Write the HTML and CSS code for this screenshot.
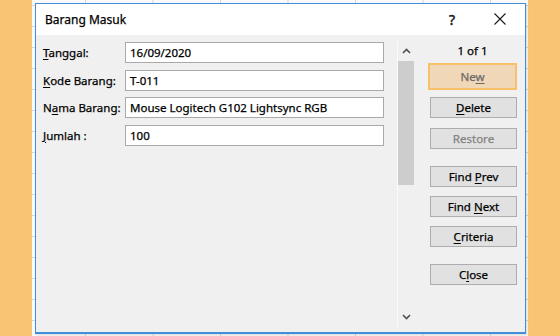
FILE: index.html
```html
<!DOCTYPE html>
<html>
<head>
<meta charset="utf-8">
<link rel="stylesheet" href="styles.css">
</head>
<body>
<div class="sheet">
  <div class="dialog">
    <div class="titlebar">
      <span class="title">Barang Masuk</span>
      <span class="help">?</span>
      <svg class="close-x" width="12" height="12" viewBox="0 0 12 12"><path d="M0.5 0.5 L11.5 11.5 M11.5 0.5 L0.5 11.5" stroke="#1a1a1a" stroke-width="1.1" fill="none"/></svg>
    </div>
    <div class="content">
      <div class="form">
        <div class="row"><label class="lbl"><u>T</u>anggal:</label><div class="field">16/09/2020</div></div>
        <div class="row"><label class="lbl"><u>K</u>ode Barang:</label><div class="field">T-011</div></div>
        <div class="row"><label class="lbl">N<u>a</u>ma Barang:</label><div class="field">Mouse Logitech G102 Lightsync RGB</div></div>
        <div class="row"><label class="lbl"><u>J</u>umlah :</label><div class="field">100</div></div>
      </div>
      <div class="scrollbar">
        <div class="arrow"><svg width="9" height="6" viewBox="0 0 9 6"><path d="M1 5 L4.5 1.5 L8 5" stroke="#505050" stroke-width="1.6" fill="none"/></svg></div>
        <div class="thumb"></div>
        <div class="track"></div>
        <div class="arrow"><svg width="9" height="6" viewBox="0 0 9 6"><path d="M1 1 L4.5 4.5 L8 1" stroke="#505050" stroke-width="1.6" fill="none"/></svg></div>
      </div>
      <div class="buttons">
        <div class="count">1 of 1</div>
        <div class="btn btn-default">Ne<u>w</u></div>
        <div class="btn"><u>D</u>elete</div>
        <div class="btn disabled">Restore</div>
        <div class="btn sep">Find <u>P</u>rev</div>
        <div class="btn">Find <u>N</u>ext</div>
        <div class="btn"><u>C</u>riteria</div>
        <div class="btn sep">C<u>l</u>ose</div>
      </div>
    </div>
  </div>
</div>
</body>
</html>
```
FILE: styles.css
```css
* { box-sizing: border-box; }
html, body { margin: 0; padding: 0; }
body {
  width: 560px;
  height: 336px;
  overflow: hidden;
  background: #f9c572;
  font-family: "Noto Sans", "Open Sans", sans-serif;
  font-size: 11.5px;
  color: #000;
  -webkit-text-stroke: 0.25px currentColor;
}
.sheet {
  margin-left: 32px;
  width: 496px;
  height: 336px;
  padding: 3px 2px 3px 3px;
  background-color: #fafafa;
  background-image:
    linear-gradient(to right, #d6d6d6 1px, transparent 1px),
    linear-gradient(#d6d6d6 1px, transparent 1px);
  background-size: 67.5px 21px;
  background-position: 53px 5px;
}
.dialog {
  width: 491px;
  height: 331px;
  border: 1px solid #3f8fdb;
  border-bottom-width: 2px;
  display: flex;
  flex-direction: column;
  background: #f0f0f0;
  box-shadow: 1px 1px 2px rgba(0,0,0,0.15);
}
.titlebar {
  height: 31px;
  background: #fff;
  display: flex;
  align-items: center;
  padding-left: 9px;
  flex: none;
}
.title { font-size: 12px; flex: 1; margin-top: -1px; }
.help { font-size: 14px; width: 8px; margin-right: 37px; margin-top: -1px; color: #1a1a1a; -webkit-text-stroke: 0.5px #1a1a1a; }
.close-x { margin-right: 19px; margin-top: -1px; }
.content {
  flex: 1;
  display: flex;
  align-items: flex-start;
}
.form {
  padding: 7px 0 0 7px;
  display: flex;
  flex-direction: column;
  gap: 6.5px;
}
.row { display: flex; align-items: center; height: 21px; }
.lbl { width: 82px; }
.field {
  width: 259px;
  height: 21px;
  background: #fff;
  border: 1px solid #a9a9a9;
  padding-left: 4px;
  line-height: 19px;
  white-space: nowrap;
}
.scrollbar {
  margin-left: 13px;
  margin-top: 6px;
  width: 17px;
  height: 286px;
  border-left: 1px solid #fbfbfb;
  display: flex;
  flex-direction: column;
}
.arrow {
  height: 20px;
  display: flex;
  align-items: center;
  justify-content: center;
  flex: none;
}
.thumb { height: 124px; background: #cdcdcd; flex: none; }
.track { flex: 1; }
.buttons {
  margin-left: 14px;
  width: 89px;
  display: flex;
  flex-direction: column;
  align-items: flex-end;
  padding-top: 8px;
}
.count { width: 89px; text-align: center; height: 15px; line-height: 15px; margin-bottom: 5px; }
.btn {
  width: 87px;
  height: 21px;
  background: #e1e1e1;
  border: 1px solid #adadad;
  text-align: center;
  line-height: 19px;
  margin-top: 9px;
}
.btn-default {
  width: 89px;
  height: 27px;
  margin-top: 0;
  border: 2px solid #f7c06a;
  background-color: #f4dcbd;
  background-image: radial-gradient(rgba(190,160,120,0.25) 0.5px, transparent 0.8px);
  background-size: 2px 2px;
  color: #6a6a6a;
  line-height: 23px;
}
.btn-default + .btn { margin-top: 7px; }
.btn.disabled { color: #838383; margin-top: 10px; }
.btn.sep { margin-top: 17px; }
u { text-underline-offset: 2px; }
```
